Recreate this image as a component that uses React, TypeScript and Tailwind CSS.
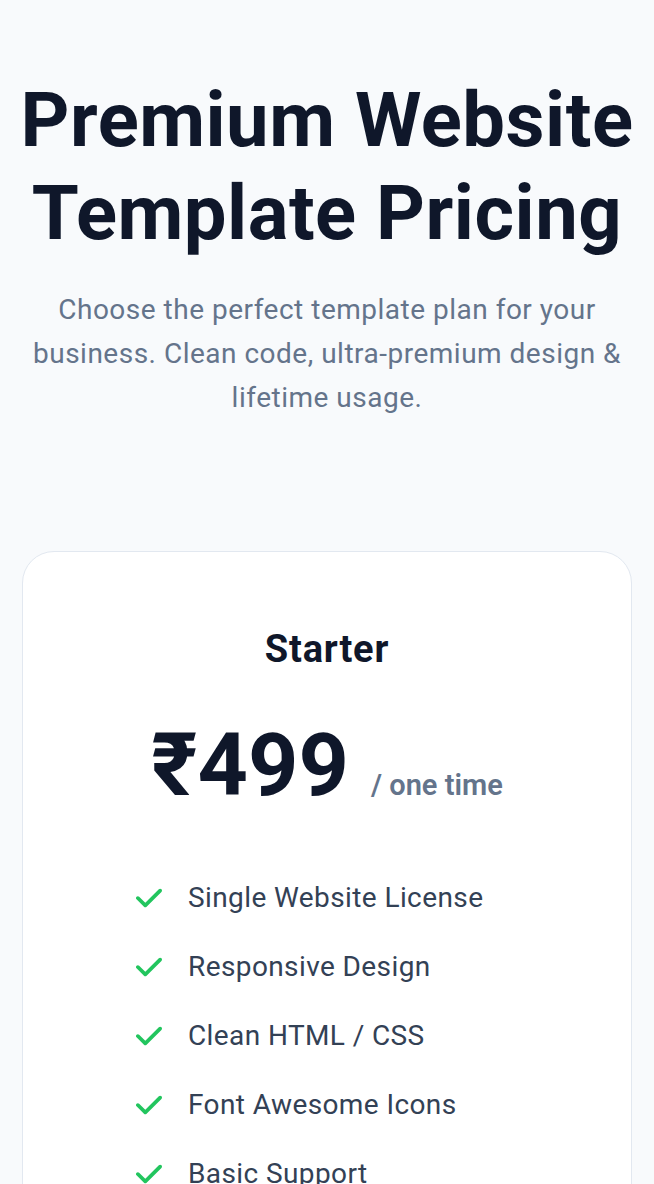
import React from "react";

const features = [
  "Single Website License",
  "Responsive Design",
  "Clean HTML / CSS",
  "Font Awesome Icons",
  "Basic Support",
];

function Check() {
  return (
    <svg viewBox="0 0 448 512" className="w-[26px] h-[30px] shrink-0 fill-[#22c55e]">
      <path d="M438.6 105.4c12.5 12.5 12.5 32.8 0 45.3l-256 256c-12.5 12.5-32.8 12.5-45.3 0l-128-128c-12.5-12.5-12.5-32.8 0-45.3s32.8-12.5 45.3 0L160 338.7 393.4 105.4c12.5-12.5 32.8-12.5 45.3 0z" />
    </svg>
  );
}

export default function App() {
  return (
    <div className="min-h-screen bg-[#f8fafc] font-['Roboto',sans-serif] px-[22px] pt-[74px]">
      <h1 className="-mx-[20px] text-center font-bold text-[76px] leading-[93px] text-[#0f172a] tracking-[0.5px]">
        Premium Website Template Pricing
      </h1>
      <p className="mt-[28px] text-center text-[28px] leading-[44px] text-[#64748b] tracking-[0.5px]">
        Choose the perfect template plan for your business. Clean code, ultra-premium design &amp; lifetime usage.
      </p>
      <div className="mt-[131px] bg-white border border-[#e2e8f0] rounded-[32px] pt-[75px] pb-[60px]">
        <h2 className="text-center font-bold text-[38px] leading-[44px] text-[#0f172a] tracking-[0.8px]">Starter</h2>
        <div className="mt-[44px] flex items-baseline justify-center gap-[22px]">
          <span className="font-bold text-[88px] leading-[100px] text-[#0f172a]">₹499</span>
          <span className="font-semibold text-[29px] text-[#64748b]">/ one time</span>
        </div>
        <ul className="mt-[68px] pl-[113px] flex flex-col gap-[39px]">
          {features.map((f) => (
            <li key={f} className="flex items-center gap-[26px] text-[28px] leading-[30px] text-[#334155] tracking-[0.4px]">
              <Check />
              <span>{f}</span>
            </li>
          ))}
        </ul>
      </div>
    </div>
  );
}
